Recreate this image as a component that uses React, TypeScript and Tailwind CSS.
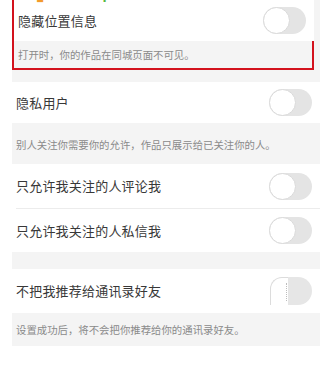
import React from 'react';

const font = { fontFamily: '"Noto Sans CJK SC", "Noto Sans", sans-serif' };

function Toggle({ broken = false }: { broken?: boolean }) {
  if (broken) {
    // glitched toggle in the screenshot: white block on the left, grey half-round on the right
    return (
      <div className="relative w-[42px] h-[28px] mr-[8px]">
        <div className="absolute right-0 top-0 w-[30px] h-[28px] rounded-r-full bg-[#e6e6e6]" />
        <div className="absolute left-0 top-0 w-[18px] h-[28px] rounded-tl-[12px] bg-white border-l border-t border-[#dcdcdc]" />
        <div className="absolute left-[16px] top-[6px] h-[18px] border-l border-dotted border-[#bdbdbd]" />
      </div>
    );
  }
  return (
    <div className="relative w-[43px] h-[27px] rounded-full bg-[#e4e4e4] mr-[8px]">
      <div className="absolute left-0 top-0 w-[27px] h-[27px] rounded-full bg-white border border-[#dadada]" />
    </div>
  );
}

function Row({ title, broken, className = '' }: { title: string; broken?: boolean; className?: string }) {
  return (
    <div className={`flex items-center justify-between bg-white pl-[4px] ${className}`}>
      <span className="text-[13px] text-[#383838] tracking-[0.2px]">{title}</span>
      <Toggle broken={broken} />
    </div>
  );
}

function Desc({ text, className = '' }: { text: string; className?: string }) {
  return (
    <div className={`bg-[#f4f4f4] pl-[4px] text-[10.4px] text-[#8a8a8a] ${className}`}>{text}</div>
  );
}

export default function App() {
  return (
    <div className="relative w-[331px] h-[368px] bg-white overflow-hidden" style={font}>
      {/* watermark, only its bottom edge shows */}
      <div className="absolute top-[-17px] left-[36px] flex items-end gap-[16px] text-[15px] font-bold z-10">
        <span className="text-[#f39a2b]">▮</span>
        <span className="text-[#58b83f] tracking-[1px]" style={{ fontFamily: '"Liberation Sans", sans-serif' }}>
          www.pc6sol.com
        </span>
      </div>

      <div className="ml-[12px] w-[308px] bg-[#f4f4f4] flex flex-col">
        {/* highlighted block */}
        <div className="w-[302px] border-l-2 border-r-2 border-b-2 border-[#d3121d] flex flex-col">
          <Row title="隐藏位置信息" className="h-[41px] -mr-[2px]" />
          <Desc text="打开时，你的作品在同城页面不可见。" className="h-[27px] flex items-center" />
        </div>
        <div className="h-[12px]" />

        <Row title="隐私用户" className="h-[41px]" />
        <Desc text="别人关注你需要你的允许，作品只展示给已关注你的人。" className="h-[41px] pt-[14px]" />

        <Row title="只允许我关注的人评论我" className="h-[44px]" />
        <div className="h-px bg-white pl-[4px]">
          <div className="h-px bg-[#ececec]" />
        </div>
        <Row title="只允许我关注的人私信我" className="h-[43px]" />
        <div className="h-[17px]" />

        <Row title="不把我推荐给通讯录好友" broken className="h-[44px]" />
        <Desc text="设置成功后，将不会把你推荐给你的通讯录好友。" className="h-[33px] flex items-center" />
      </div>
    </div>
  );
}
